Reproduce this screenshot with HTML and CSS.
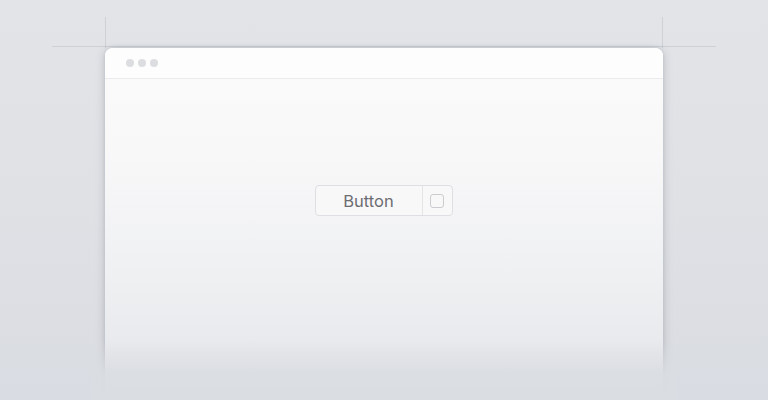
FILE: index.html
```html
<!DOCTYPE html>
<html>
<head>
<meta charset="utf-8">
<link rel="stylesheet" href="styles.css">
</head>
<body>
<div class="stage">
  <div class="guide guide-v guide-left"></div>
  <div class="guide guide-v guide-right"></div>
  <div class="guide guide-h"></div>
  <div class="window">
    <div class="titlebar">
      <span class="dot"></span><span class="dot"></span><span class="dot"></span>
    </div>
    <div class="content">
      <div class="split-button">
        <span class="label">Button</span>
        <span class="toggle"><span class="box"></span></span>
      </div>
    </div>
    <div class="fade"></div>
  </div>
</div>
</body>
</html>
```

FILE: styles.css
```css
html, body {
  margin: 0;
  padding: 0;
}
body {
  width: 768px;
  height: 400px;
  overflow: hidden;
  background: linear-gradient(180deg, #e2e4e8 0%, #dfe1e5 50%, #d9dce2 100%);
  font-family: "Inter", "Liberation Sans", sans-serif;
}
.stage {
  position: relative;
  width: 768px;
  height: 400px;
  padding-top: 48px;
  box-sizing: border-box;
}
.guide {
  position: absolute;
  background: rgba(160, 164, 172, 0.3);
}
.guide-v {
  top: 17px;
  width: 1px;
  height: 31px;
}
.guide-left { left: 105px; }
.guide-right { left: 662px; }
.guide-h {
  top: 46px;
  left: 52px;
  width: 664px;
  height: 1px;
}
.window {
  position: relative;
  margin-left: 105px;
  width: 558px;
  height: 352px;
  border-radius: 8px 8px 0 0;
  background: linear-gradient(180deg, #fbfbfb 0%, #f8f8f9 30%, #eff0f2 65%, #e6e8eb 90%, #e2e4e8 100%);
  box-shadow: -4px 0 8px -3px rgba(110, 115, 125, 0.28), 4px 0 8px -3px rgba(110, 115, 125, 0.28), 0 -1px 3px rgba(120,125,135,0.15);
}
.titlebar {
  height: 31px;
  box-sizing: border-box;
  border-bottom: 1px solid #ececee;
  display: flex;
  align-items: center;
  gap: 4px;
  padding-left: 21px;
  background: #fdfdfd;
  border-radius: 8px 8px 0 0;
}
.dot {
  width: 8px;
  height: 8px;
  border-radius: 50%;
  background: #dcdde0;
}
.content {
  display: flex;
  justify-content: center;
  padding-top: 106px;
}
.split-button {
  display: flex;
  height: 31px;
  box-sizing: border-box;
  border: 1px solid #dedfe2;
  border-radius: 4px;
  background: #f8f8f9;
  margin-left: -1px;
}
.label {
  width: 106px;
  display: flex;
  align-items: center;
  justify-content: center;
  font-size: 16.5px;
  color: #6d6d71;
  border-right: 1px solid #e3e4e6;
}
.toggle {
  width: 29px;
  display: flex;
  align-items: center;
  justify-content: center;
}
.box {
  width: 14px;
  height: 14px;
  box-sizing: border-box;
  border: 1.5px solid #cbccd0;
  border-radius: 3px;
}
.fade {
  position: absolute;
  left: -14px;
  right: -14px;
  bottom: 0;
  height: 60px;
  background: linear-gradient(180deg, rgba(218, 221, 226, 0) 0%, rgba(218, 221, 226, 0.9) 55%, #dadde2 100%);
}
```
